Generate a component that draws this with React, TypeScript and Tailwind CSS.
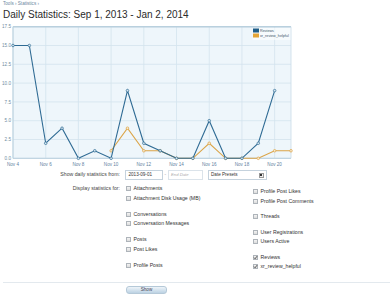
import React from 'react';

const reviews = [15, 15, 2, 4, 0, 1, 0, 9, 2, 1, 0, 0, 5, 0, 0, 2, 9];
const helpful = [null, null, null, null, null, null, 1, 4, 1, 1, 0, 0, 2, 0, 0, 0, 1, 1];

const X0 = 13;
const X1 = 291;
const Y0 = 159.3;
const YTOP = 27.7;
const step = (X1 - X0) / 17;
const px = (i: number) => X0 + i * step;
const py = (v: number) => Y0 - v * ((Y0 - YTOP) / 17.5);

const yTicks = [0, 2.5, 5, 7.5, 10, 12.5, 15, 17.5];
const xTicks = ['Nov 4', 'Nov 6', 'Nov 8', 'Nov 10', 'Nov 12', 'Nov 14', 'Nov 16', 'Nov 18', 'Nov 20'];

const Chart = () => {
  const blue = reviews.map((v, i) => `${px(i)},${py(v)}`).join(' ');
  const orangePts = helpful
    .map((v, i) => (v === null ? null : [px(i), py(v)]))
    .filter((p): p is number[] => p !== null);
  const orange = orangePts.map((p) => p.join(',')).join(' ');

  return (
    <svg width="300" height="148" viewBox="0 22 300 148" className="block">
      <rect x={X0} y={YTOP} width={X1 - X0} height={Y0 - YTOP} fill="#eef6fb" />
      {yTicks.map((t) => (
        <line key={t} x1={X0} x2={X1} y1={py(t)} y2={py(t)} stroke="#d3e3ed" strokeWidth="0.8" />
      ))}
      {xTicks.map((_, k) => (
        <line key={k} x1={px(k * 2)} x2={px(k * 2)} y1={YTOP} y2={Y0} stroke="#d3e3ed" strokeWidth="0.8" />
      ))}
      <line x1={X0} x2={X1} y1={YTOP} y2={YTOP} stroke="#b9d0de" strokeWidth="1.6" />
      <line x1={X0} x2={X0} y1={YTOP} y2={Y0} stroke="#b9d0de" strokeWidth="1" />
      <line x1={X1} x2={X1} y1={YTOP} y2={Y0} stroke="#c9dce8" strokeWidth="0.8" />
      <line x1={X0} x2={X1} y1={Y0} y2={Y0} stroke="#b9d0de" strokeWidth="1" />

      {yTicks.map((t) => (
        <text key={t} x="11" y={py(t) + 1.6} fontSize="4.6" fill="#6f8ba0" textAnchor="end">
          {t.toFixed(1)}
        </text>
      ))}
      {xTicks.map((l, k) => (
        <text key={l} x={px(k * 2)} y="166.5" fontSize="4.6" fill="#5f82a0" textAnchor="middle">
          {l}
        </text>
      ))}

      <polyline points={orange} fill="none" stroke="#dba447" strokeWidth="1.1" />
      {orangePts.map((p, i) => (
        <circle key={i} cx={p[0]} cy={p[1]} r="1.3" fill="#f8ead0" stroke="#dba447" strokeWidth="0.7" />
      ))}
      <polyline points={blue} fill="none" stroke="#2f6b94" strokeWidth="1.1" />
      {reviews.map((v, i) => (
        <circle key={i} cx={px(i)} cy={py(v)} r="1.3" fill="#d6e5ef" stroke="#2f6b94" strokeWidth="0.7" />
      ))}

      <rect x="252.5" y="29" width="38" height="12" fill="#ffffff" fillOpacity="0.55" />
      <rect x="253" y="29.5" width="6" height="4" fill="#1f5d88" />
      <rect x="253" y="34.5" width="6" height="4" fill="#e3a437" />
      <text x="260" y="33" fontSize="3.7" fill="#3d5567">Reviews</text>
      <text x="260" y="38" fontSize="3.7" fill="#3d5567">xr_review_helpful</text>
    </svg>
  );
};

const Box = ({ checked }: { checked?: boolean }) => (
  <span className="relative w-[5px] h-[5px] border-[0.6px] border-[#aeb4ba] bg-gradient-to-b from-[#f4f4f4] to-[#dcdcdc] shrink-0 flex items-center justify-center">
    {checked && (
      <svg width="5" height="5" viewBox="0 0 10 10" className="absolute">
        <path d="M2 5.2 L4.2 7.5 L8.2 2.2" fill="none" stroke="#333" strokeWidth="1.6" />
      </svg>
    )}
  </span>
);

const Item = ({ label, checked }: { label: string; checked?: boolean }) => (
  <div className="h-[9.5px] flex items-center gap-[3px] text-[5.2px] text-[#333]">
    <Box checked={checked} />
    <span>{label}</span>
  </div>
);

const Group = ({ children }: { children: React.ReactNode }) => <div className="flex flex-col">{children}</div>;

export default function App() {
  return (
    <div className="w-[390px] h-[300px] bg-white overflow-hidden font-['Liberation_Sans',Arial,sans-serif] flex flex-col">
      <div className="h-[8px] pl-[3px] pt-[1px] text-[4.6px] leading-[6px] text-[#6e87a0]">Tools › Statistics ›</div>
      <h1 className="pl-[3px] mt-[1px] text-[10px] leading-[12px] text-[#2b2b2b] font-normal">
        Daily Statistics: Sep 1, 2013 - Jan 2, 2014
      </h1>
      <Chart />

      <div className="flex items-center h-[10px] mt-[1px]">
        <div className="w-[120px] text-right text-[5.2px] text-[#444]">Show daily statistics from:</div>
        <div className="ml-[5px] flex items-center">
          <div className="w-[38px] h-[10px] border-[0.6px] border-[#c5d2dd] bg-white flex items-center px-[2.5px] text-[4.6px] text-[#333]">
            2013-09-01
          </div>
          <span className="mx-[1.5px] text-[4.6px] text-[#999]">-</span>
          <div className="w-[35px] h-[10px] border-[0.6px] border-[#dbe3ea] bg-white flex items-center px-[2.5px] text-[4.2px] italic text-[#aaa]">
            End Date
          </div>
          <div className="ml-[5px] w-[59px] h-[10px] border-[0.6px] border-[#c5d2dd] bg-white flex items-center justify-between pl-[2.5px] pr-[2px] text-[4.6px] text-[#333]">
            <span>Date Presets</span>
            <span className="w-[5px] h-[5px] border-[0.6px] border-[#999] bg-[#eee] flex items-center justify-center">
              <span className="w-[2.5px] h-[1.5px] bg-[#333]" />
            </span>
          </div>
        </div>
      </div>

      <div className="flex mt-[4.2px]">
        <div className="w-[120px] h-[9.5px] leading-[9.5px] text-right text-[5.2px] text-[#444]">Display statistics for:</div>
        <div className="ml-[5.5px] w-[127px] flex flex-col gap-[6.5px]">
          <Group>
            <Item label="Attachments" />
            <Item label="Attachment Disk Usage (MB)" />
          </Group>
          <Group>
            <Item label="Conversations" />
            <Item label="Conversation Messages" />
          </Group>
          <Group>
            <Item label="Posts" />
            <Item label="Post Likes" />
          </Group>
          <Group>
            <Item label="Profile Posts" />
          </Group>
        </div>
        <div className="pt-[3px] flex flex-col gap-[6px]">
          <Group>
            <Item label="Profile Post Likes" />
            <Item label="Profile Post Comments" />
          </Group>
          <Group>
            <Item label="Threads" />
          </Group>
          <Group>
            <Item label="User Registrations" />
            <Item label="Users Active" />
          </Group>
          <Group>
            <Item label="Reviews" checked />
            <Item label="xr_review_helpful" checked />
          </Group>
        </div>
      </div>

      <div className="ml-[3px] mt-[10px] border-t-[0.8px] border-[#e3e9ee] pt-[3.5px] pl-[123px]">
        <button className="w-[41px] h-[8px] rounded-[3px] border-[0.6px] border-[#b5c9d8] bg-gradient-to-b from-[#eef4f9] to-[#bcd2e3] text-[4.6px] text-[#445] flex items-center justify-center leading-none">
          Show
        </button>
      </div>
    </div>
  );
}
